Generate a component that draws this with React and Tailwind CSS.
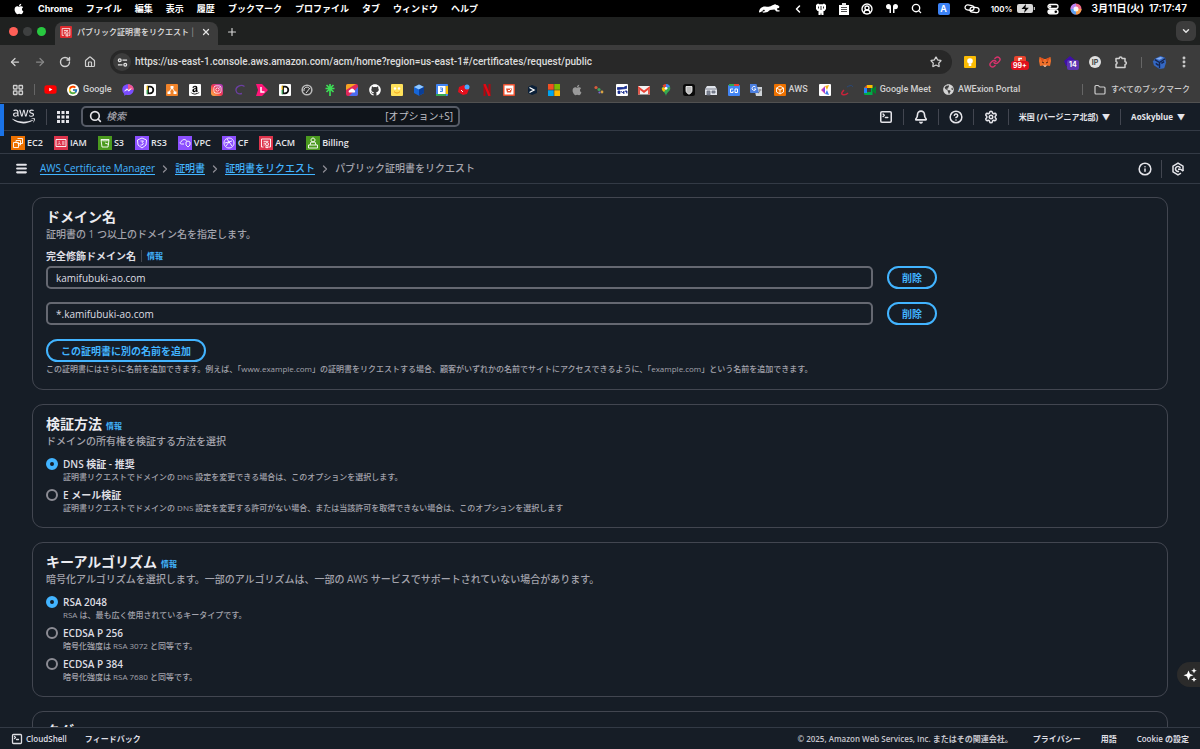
import React from "react";
import {
  ArrowLeft, ArrowRight, RotateCw, House, Star, Plus, X, ChevronDown, ChevronRight, ChevronLeft,
  Search, Bell, CircleHelp, Settings, Menu, Info, Folder, EllipsisVertical, LayoutGrid,
  CircleUserRound, SquareTerminal, Link,
} from "lucide-react";
import {
  FaApple, FaAws, FaAmazon, FaYoutube, FaFacebookMessenger, FaInstagram, FaGithub, FaGlobeAmericas,
} from "react-icons/fa";
import { FcGoogle } from "react-icons/fc";

const MENUS = ["ファイル", "編集", "表示", "履歴", "ブックマーク", "プロファイル", "タブ", "ウィンドウ", "ヘルプ"];

function Cat() {
  return (
    <svg viewBox="0 0 22 10" className="h-[10px] w-[22px]" fill="#fff">
      <path d="M1 7.500c.5-2.500 2-4.500 5-5 2-.4 4 .5 6 0 1.500-.4 2.500-1.500 4-1.700l1.200-.8.600.8 2.200.4 1.500 1.500-.6 1.300-2 .5.6 1.800h2v1.200h-3L16.500 5.500l-4.500.5-2.500 2-4 .8-1.500-1 3-.8L6 5.500 3 8l-2 .5z" />
    </svg>
  );
}

function Airpods() {
  return (
    <svg viewBox="0 0 14 12" className="h-3 w-[14px]" fill="#fff">
      <path d="M1 3.500C1 2 2 1 3.500 1S6 2 6 3.500V10H4.500V6C2.500 6.500 1 5.500 1 3.500zM13 3.500C13 2 12 1 10.500 1S8 2 8 3.500V10h1.500V6C11.500 6.500 13 5.500 13 3.500z" />
    </svg>
  );
}

function MenuBar() {
  return (
    <header className="flex h-[17px] shrink-0 items-center bg-black pr-[13px] pl-[13px] text-[9px] font-semibold text-white">
      <FaApple className="mr-[13px] size-3" />
      <nav className="flex flex-1 items-center gap-[13px] whitespace-nowrap">
        <span className="font-bold">Chrome</span>
        {MENUS.map((m) => <span key={m}>{m}</span>)}
      </nav>
      <div className="flex items-center whitespace-nowrap">
        <Cat />
        <ChevronLeft className="ml-3 size-3" strokeWidth={3} />
        <svg viewBox="0 0 12 12" className="ml-[11px] size-3" fill="#fff">
          <path d="M1 2l2-1.500 2 1 1-.5 1 .5 2-1L11 2v4L9.500 8H8.500v4h-2L6 9.500 5.500 12h-2V8h-1L1 6z" />
          <path d="M3.500 3.500v2M6 3v4M8.500 3.500v2" stroke="#000" strokeWidth=".8" />
        </svg>
        <svg viewBox="0 0 12 12" className="ml-[11px] size-3">
          <path d="M1 2h10v10H1z" fill="#fff" /><path d="M4 0h4v2.500H4z" fill="#ddd" />
          <path d="M3 4.500h6M3 6.500h6M3 8.500h6" stroke="#222" strokeWidth=".8" />
        </svg>
        <CircleUserRound className="ml-[11px] size-3" strokeWidth={2.8} />
        <span className="ml-3"><Airpods /></span>
        <Search className="ml-3 size-[11px]" strokeWidth={3} />
        <span className="ml-4 flex size-3 items-center justify-center rounded-[2px] bg-[#3b82f6] text-[9px] leading-none">A</span>
        <svg viewBox="0 0 16 12" className="ml-[14px] h-3 w-4" fill="none" stroke="#fff" strokeWidth="1.300">
          <rect x="1" y="2.300" width="9" height="5" rx="2.500" transform="rotate(8 6 5)" />
          <rect x="6" y="4.300" width="9" height="5" rx="2.500" transform="rotate(8 10 7)" />
        </svg>
        <span className="ml-[11px] text-[8px]">100%</span>
        <svg viewBox="0 0 18 9" className="ml-1 h-[9px] w-[18px]">
          <rect width="16" height="9" rx="2" fill="#d8d8d8" /><path d="M16.700 3v3h1.300V3z" fill="#bbb" />
          <path d="M9 0L4.500 5H8l-1 4 4.800-5.200H8.500z" fill="#000" />
        </svg>
        <svg viewBox="0 0 12 12" className="ml-3 size-3" fill="none" stroke="#fff" strokeWidth="1.300">
          <rect x="1" y="1.500" width="10" height="4" rx="2" /><rect x="1" y="6.800" width="10" height="4" rx="2" fill="#fff" />
          <circle cx="3" cy="3.500" r="1.300" fill="#fff" stroke="none" /><circle cx="8.800" cy="8.800" r="1.300" fill="#000" stroke="none" />
        </svg>
        <svg viewBox="0 0 12 12" className="ml-[11px] size-3">
          <circle cx="6" cy="6" r="5.500" fill="#ef6b8a" /><path d="M6 .5A5.500 5.500 0 0 0 .5 6H6z" fill="#b983f5" />
          <path d="M6 11.500A5.500 5.500 0 0 0 11.500 6H6z" fill="#f9a04b" /><path d="M.5 6A5.500 5.500 0 0 0 6 11.500V6z" fill="#5aa0f0" />
          <circle cx="6" cy="6" r="2.500" fill="#fff" opacity=".9" />
        </svg>
        <span className="ml-[10px] text-[10px]">3月11日(火)</span>
        <span className="ml-[5px] text-[10px]">17:17:47</span>
      </div>
    </header>
  );
}

function AcmGlyph({ className }) {
  return (
    <svg viewBox="0 0 14 14" className={className} fill="none" stroke="#fff" strokeWidth=".9">
      <path d="M4.500 11H2.500V3h9v8H10M4.500 5.300h5M4.500 7.200h1.800M4.500 9h1.200" />
      <circle cx="8" cy="8" r="1.500" /><path d="M7 9.500V12l1-.8 1 .8V9.500" />
    </svg>
  );
}

function TabStrip() {
  return (
    <div className="flex h-7 shrink-0 items-end bg-[#1f2120] pr-1 pl-[9px]">
      <div className="flex h-7 items-center gap-[5px] pt-[1px]">
        <i className="size-[9px] rounded-full bg-[#ff5f57]" />
        <i className="size-[9px] rounded-full bg-[#3e4040]" />
        <i className="size-[9px] rounded-full bg-[#28c840]" />
      </div>
      <div className="ml-[9px] flex h-[23px] w-[163px] items-center rounded-t-lg bg-[#3c3c3c] pr-[7px] pb-1 pl-[5px] text-[8px] font-medium text-[#e3e3e3]">
        <AcmGlyph className="size-3 shrink-0 rounded-[1px] bg-[#dd2b2f]" />
        <span className="ml-[5px] flex-1 whitespace-nowrap">パブリック証明書をリクエスト <span className="text-[#8a8a8a]">|</span></span>
        <button aria-label="タブを閉じる" className="ml-1"><X className="size-[10px]" strokeWidth={3} /></button>
      </div>
      <button aria-label="新しいタブ" className="ml-2 flex h-[23px] items-center pb-1 text-[#d5d5d5]"><Plus className="size-3" strokeWidth={2.300} /></button>
      <button aria-label="タブを検索" className="mb-1 ml-auto flex size-5 items-center justify-center rounded-md bg-[#3c3c3c] text-[#e3e3e3]">
        <ChevronDown className="size-[10px]" strokeWidth={3.500} />
      </button>
    </div>
  );
}

function Toolbar() {
  return (
    <div className="flex h-[34px] shrink-0 items-center bg-[#3c3c3c] pr-[9px] pl-[9px] text-[#d0d0d0]">
      <div className="flex items-center gap-[13px]">
        <button aria-label="戻る"><ArrowLeft className="size-3" strokeWidth={2.500} /></button>
        <button aria-label="進む" className="text-[#868686]"><ArrowRight className="size-3" strokeWidth={2.500} /></button>
        <button aria-label="再読み込み"><RotateCw className="size-3" strokeWidth={2.800} /></button>
        <button aria-label="ホーム"><House className="size-3" strokeWidth={2.400} /></button>
      </div>
      <div className="ml-[14px] flex h-6 flex-1 items-center rounded-full bg-[#282828] pr-[10px] pl-[3px]">
        <span className="flex size-[18px] items-center justify-center rounded-full bg-[#3c3c3c]">
          <svg viewBox="0 0 12 12" className="size-[11px]" fill="none" stroke="#e3e3e3" strokeWidth="1.400">
            <circle cx="3" cy="3.500" r="1.500" /><path d="M6 3.500h5M1 8.500h5" /><circle cx="9" cy="8.500" r="1.500" />
          </svg>
        </span>
        <input
          aria-label="アドレス"
          className="ml-1 min-w-0 flex-1 bg-transparent font-['Roboto',sans-serif] text-[10px] leading-4 font-medium text-[#dcdcdc] outline-none"
          defaultValue="https://us-east-1.console.aws.amazon.com/acm/home?region=us-east-1#/certificates/request/public"
        />
        <button aria-label="ブックマークに追加"><Star className="size-3" strokeWidth={2.500} /></button>
      </div>
      <div className="ml-3 flex items-center gap-[13px]">
        <svg viewBox="0 0 12 12" className="size-3"><rect width="12" height="12" rx="1" fill="#fbbc04" /><circle cx="6" cy="5" r="2.800" fill="#fff" /><path d="M4.700 7.500h2.600V10H4.700z" fill="#fff" /></svg>
        <Link className="size-3 text-[#d6336c]" strokeWidth={2.800} />
        <span className="relative size-3 rounded-[2px] bg-[#e8432d]">
          <svg viewBox="0 0 12 12" className="size-3"><path d="M8 2.500H5v3" fill="none" stroke="#fff" strokeWidth="1.500" /></svg>
          <b className="absolute top-[5px] -left-[3px] rounded-[3px] bg-[#e0101c] px-[2px] text-[7px] leading-[9px] text-white">99+</b>
        </span>
        <svg viewBox="0 0 12 12" className="size-3">
          <path d="M.5 1L5 3h2l4.500-2L12 5l-1 5-3-.5L6 11 4 9.500 1 10 0 5z" fill="#f0702a" /><path d="M.5 1L5 3 3.500 6zM11.500 1L7 3l1.500 3z" fill="#d9501e" /><path d="M4 9.500h4L6 11z" fill="#dfd4c8" /><path d="M3 6l2 1M9 6L7 7" stroke="#442212" />
        </svg>
        <span className="relative size-3">
          <svg viewBox="0 0 12 12" className="size-3"><path d="M0 5l6-5 6 5-2 5H2z" fill="#3f0fa8" /></svg>
          <b className="absolute top-1 left-[3px] rounded-[2px] bg-[#5e35b1] px-[2px] text-[7px] leading-[10px] text-white">14</b>
        </span>
        <span className="flex size-3 items-center justify-center rounded-full bg-[#e0e0e0] text-[7px] leading-none font-bold text-[#444]">IP</span>
        <svg viewBox="0 0 14 14" className="size-[14px]" fill="none" stroke="#d0d0d0" strokeWidth="1.500" strokeLinejoin="round">
          <path d="M2 3.500h3.200a1.400 1.400 0 0 1 2.800 0h3v3.200a1.400 1.400 0 0 1 0 2.800v3H2V9.300a1.500 1.500 0 0 0 0-2.900z" />
        </svg>
        <div className="flex items-center gap-[10px]">
          <i className="h-[11px] w-px bg-[#666]" />
          <svg viewBox="0 0 16 16" className="size-[15px]">
            <path d="M3 4l6-3 5 2 1 5-2 6-5 1-6-4-1-4z" fill="#3468c4" /><path d="M3 5l5 3 6-4M8 8v6M4 9l3 2M10 9l3-2" stroke="#14254f" strokeWidth="1.500" fill="none" /><path d="M4 4l5-2 3 1-4 2z" fill="#86aef2" />
          </svg>
          <button aria-label="メニュー"><EllipsisVertical className="size-[14px]" strokeWidth={3} /></button>
        </div>
      </div>
    </div>
  );
}

const S = ({ children }) => <svg viewBox="0 0 12 12" className="size-3 shrink-0">{children}</svg>;
const Chip = ({ className, children }) => (
  <span className={"flex size-3 shrink-0 items-center justify-center rounded-[1px] text-[10px] leading-none font-bold " + className}>{children}</span>
);
const D = () => (
  <S>
    <rect width="12" height="12" rx="1" fill="#fff" />
    <path d="M4 2.700h2a3.300 3.300 0 0 1 0 6.600H4z" fill="none" stroke="#111" strokeWidth="1.800" />
    <path d="M3.200 1.800v4" stroke="#f2b705" strokeWidth="1.300" /><path d="M3.200 6v4.200" stroke="#3aa655" strokeWidth="1.300" />
  </S>
);

function BookmarkIcons() {
  return (
    <div className="ml-[10px] flex w-[641px] items-center justify-between">
      <S><path d="M6 .3C2.700.3.300 2.600.300 5.700c0 1.700.7 3 1.900 4v2l1.800-1c.6.2 1.300.3 2 .3 3.300 0 5.700-2.300 5.700-5.300S9.300.3 6 .3z" fill="#7a4dff" /><path d="M6 .3c3.300 0 5.700 2.300 5.700 5.400L6 6z" fill="#f0568f" /><path d="M2.500 7.200l2.300-2.500 1.800 1.500 2.700-1.700-2.300 2.700-1.800-1.500z" fill="#fff" stroke="#fff" strokeWidth=".5" /></S>
      <D />
      <S><rect width="12" height="12" rx="1" fill="#f0832a" /><path d="M4.500 2h3v2.500h-3zM1.500 7.500h3V10h-3zM7.500 7.500h3V10h-3z" fill="#fff" /><path d="M6 4L3 8M6 4l3 4" stroke="#fff" /></S>
      <Chip className="bg-white text-black"><FaAmazon className="size-[10px]" /></Chip>
      <Chip className="rounded-[3px] bg-linear-to-tr from-[#feb938] via-[#f0324f] to-[#a12bc8] text-white"><FaInstagram className="size-[9px]" /></Chip>
      <S><path d="M10.500 2.500C7 0 1.500 2.500 2 6.500s4 3.500 6 3" fill="none" stroke="#6b3fa0" strokeWidth="1.300" /></S>
      <S><path d="M0 0h6l6 6-6 6H0l2-6z" fill="#ff1578" /><path d="M5 3v5h3.500" fill="none" stroke="#fff" strokeWidth="1.500" /></S>
      <D />
      <S><circle cx="6" cy="6" r="4.800" fill="#333" stroke="#bbb" strokeWidth="1.600" /><path d="M3 7a3 3 0 0 1 5-3M5 9l4-5" stroke="#ddd" fill="none" /></S>
      <S><path d="M6 0v12M1.500 4.500h9M2.500 1l7 7M9.500 1l-7 7" stroke="#3ddc55" strokeWidth="1.700" /></S>
      <S><rect width="12" height="12" rx="2" fill="#e0285a" /><path d="M0 2a2 2 0 0 1 2-2h8L0 6z" fill="#f5a623" /><path d="M12 3v7a2 2 0 0 1-2 2H3z" fill="#4a6cf0" /><path d="M3 8.500a1.500 1.500 0 0 1 1-2.500 2.200 2.200 0 0 1 4.200 0 1.400 1.400 0 0 1 .3 2.500z" fill="#fff" /></S>
      <FaGithub className="size-3 text-white" />
      <S><rect width="12" height="12" rx="1" fill="#ffe15a" /><circle cx="4" cy="4.500" r="1.200" fill="#fff" /><circle cx="8" cy="4.500" r="1.200" fill="#fff" /><path d="M3 7.500c2 2 4 2 6 0" fill="none" stroke="#f39c12" /></S>
      <S><path d="M6 .5l5 2.500v6l-5 2.800L1 9V3z" fill="#1666d8" /><path d="M6 .5l5 2.500-5 2.500L1 3z" fill="#8fc7ff" /><path d="M6 5.500L11 3v6l-5 2.800z" fill="#0b3f97" /></S>
      <S><rect width="12" height="12" rx="1" fill="#4285f4" /><path d="M9.500 2H12v8H9.500z" fill="#fbbc04" /><path d="M0 10h10v2H0z" fill="#34a853" /><path d="M2 2h7.500v8H2z" fill="#fff" /><path d="M4 4h2.500v3.500H4M6.500 5.800H4.500" stroke="#4285f4" fill="none" /></S>
      <S><path d="M1 3l5-2 5 4-2 5-4 1-5-3z" fill="#e5101e" /><circle cx="9" cy="3" r="2.500" fill="#4aa8ff" /><path d="M3 6l2 2" stroke="#fff" /></S>
      <S><path d="M3.500 0v12M8.500 0v12" stroke="#b1060f" strokeWidth="2" /><path d="M3.500 0l5 12" stroke="#e50914" strokeWidth="2.200" /></S>
      <S><rect width="12" height="12" rx="1" fill="#e8502f" /><path d="M1.500 1.500h9v9h-9z" fill="#fff" /><path d="M3 4.500h6l-1 4H4z" fill="#e8502f" /><path d="M5 6l1 1 2-2" stroke="#fff" fill="none" /></S>
      <S><path d="M2 3l4-2 5 2v6l-5 2-4-2z" fill="#0b2038" /><path d="M3.500 3.500L8 6 3.500 8.500" fill="none" stroke="#fff" strokeWidth="1.400" /></S>
      <S><path d="M0 0h5.700v5.700H0z" fill="#f25022" /><path d="M6.300 0H12v5.700H6.300z" fill="#7fba00" /><path d="M0 6.300h5.700V12H0z" fill="#00a4ef" /><path d="M6.300 6.300H12V12H6.300z" fill="#ffb900" /></S>
      <FaApple className="size-3 text-[#9a9a9a]" />
      <S><circle cx="3" cy="3.500" r="1.600" fill="#d95c3c" /><circle cx="6" cy="5.500" r="1.600" fill="#3da35d" /><circle cx="9" cy="8" r="1.400" fill="#d9a441" /><circle cx="6.500" cy="8.500" r="1.100" fill="#7c6bd6" /></S>
      <S><rect width="12" height="12" rx="1" fill="#fff" /><path d="M1.500 3.500h6l3-1.500v2.500l-9 1zM2 7h2v2.500H2zM5 7l1.500 2L8 7v3M9 7h2v2.500" fill="#1b2f8f" stroke="#1b2f8f" strokeWidth=".8" /></S>
      <S><path d="M0 2h12v8.500H0z" fill="#f1f1f1" /><path d="M0 2l6 4.500L12 2v2.500L6 9 0 4.500z" fill="#ea4335" /><path d="M0 4v6.500h2V5.500zM12 4v6.500h-2V5.500z" fill="#e05a4d" /></S>
      <S><path d="M6 0a4.300 4.300 0 0 1 4.300 4.300C10.300 7.500 6.800 8 6 12 5.200 8 1.700 7.500 1.700 4.300z" fill="#34a853" /><path d="M6 0a4.300 4.300 0 0 0-3.500 1.800L6 5z" fill="#ea4335" /><path d="M6 0c2 0 3.300 1.200 3.900 2.500L6 4.500z" fill="#4285f4" /><path d="M1.800 4.500C1.800 6 3 7 4 8l2-3-3-2z" fill="#fbbc04" /><circle cx="6" cy="4.300" r="1.400" fill="#fff" /></S>
      <S><rect width="12" height="12" rx="2.500" fill="#0a0a0a" /><path d="M3 2.500h6v4C9 8.500 7.500 9.500 6 10.200 4.500 9.500 3 8.500 3 6.500z" fill="#bbb" stroke="#fff" strokeWidth=".8" /></S>
      <S><path d="M0 5l2-3h8l2 3v6H0z" fill="#dfe3ea" /><path d="M2 7h3v4H2zM7 7h3v2H7zM0 5h12" stroke="#69707d" fill="#7d8594" strokeWidth=".8" /></S>
      <S><rect y="1" width="12" height="11" rx="1" fill="#4285f4" /><path d="M1 0h5v2H1z" fill="#34a853" /><path d="M6 0h5v2H6z" fill="#ea4335" /><path d="M5 5H2.500v3.500H5V7M7 5v3.500h2.500V5z" stroke="#fff" fill="none" /></S>
      <S><path d="M4 3h8v9H6z" fill="#cfd3d8" /><path d="M0 0h6.500L9 9H1a1 1 0 0 1-1-1z" fill="#4c7fe0" /><path d="M5.500 3A2 2 0 1 0 6 5H4" stroke="#fff" fill="none" strokeWidth=".9" /><path d="M8.500 6h3M10 5v1c0 1-1 3-2 3" stroke="#666" fill="none" strokeWidth=".7" /></S>
    </div>
  );
}

function Bookmarks() {
  return (
    <div className="flex h-6 shrink-0 items-center border-b border-[#515151] bg-[#3c3c3c] pr-[10px] pb-[2px] pl-3 font-['Roboto','Noto_Sans_CJK_JP',sans-serif] text-[9px] font-medium whitespace-nowrap text-[#d0d0d0]">
      <LayoutGrid className="size-3" strokeWidth={2.600} />
      <i className="ml-[10px] h-[11px] w-px bg-[#666]" />
      <span className="relative ml-[9px] flex size-[13px] items-center justify-center"><i className="absolute size-[6px] bg-white" /><FaYoutube className="relative size-[13px] text-[#f00]" /></span>
      <a href="#google" className="ml-[10px] flex items-center gap-1">
        <span className="flex size-3 items-center justify-center rounded-full bg-white"><FcGoogle className="size-[10px]" /></span>Google
      </a>
      <BookmarkIcons />
      <a href="#aws" className="ml-[11px] flex items-center gap-[3px]">
        <S><rect width="12" height="12" rx="1" fill="#ed7100" /><path d="M6 2l3.500 2v4L6 10 2.500 8V4zM2.500 4L6 6l3.500-2M6 6v4" fill="none" stroke="#fff" strokeWidth=".9" /></S>AWS
      </a>
      <span className="ml-[11px]"><S><rect width="12" height="12" rx="1" fill="#fff" /><path d="M2 6l4-4v8z" fill="#f04f9a" /><path d="M6 2l4-1-2 5z" fill="#f6b21b" /><path d="M6 10l4 1-2-5z" fill="#3f7be8" /><path d="M6 3v6L3 6z" fill="#8b3fe0" /></S></span>
      <span className="ml-[10px]"><S><path d="M3 6C1 8 0 10 1.500 10.500 3.500 11.200 6 10 7 9" fill="none" stroke="#c8233a" strokeWidth="1.500" /><path d="M6 3c3-2 6-2 5.500 0" fill="none" stroke="#294a7d" strokeWidth="1" /></S></span>
      <a href="#meet" className="ml-[11px] flex items-center gap-1">
        <S><path d="M0 3.500L3 1h5.500v10H1.500A1.500 1.500 0 0 1 0 9.500z" fill="#00ac47" /><path d="M0 4l3-3v3z" fill="#ea4335" /><path d="M0 4h3v5H0z" fill="#2684fc" /><path d="M3 1h5.500v3H3z" fill="#ffba00" /><path d="M3 4h4v4H3z" fill="#3c3c3c" /><path d="M8 5.500L12 2v8L8 7z" fill="#00832d" /></S>Google Meet
      </a>
      <a href="#portal" className="ml-3 flex items-center gap-1">
        <FaGlobeAmericas className="size-[11px] text-[#d5d5d5]" />AWExion Portal
      </a>
      <i className="ml-auto h-[11px] w-px bg-[#666]" />
      <a href="#bookmarks" className="ml-[11px] flex items-center gap-[5px] text-[8px]"><Folder className="size-3" strokeWidth={2.300} />すべてのブックマーク</a>
    </div>
  );
}

const Sep = ({ className = "h-4" }) => <i className={"w-px bg-[#424650] " + className} />;

const SERVICES = [
  ["EC2", "bg-[#ed7100]", "M2.500 6.500h5v5h-5zM6.500 2.500h5v5h-5M5 6.500V4.500h4.500V9H7.500"],
  ["IAM", "bg-[#dd344c]", "M2 3.500h10v7H2zM4 8.500c0-1 2.500-1 2.500 0M8 6h2.500M8 8h2.500M5.200 5.300v1.200"],
  ["S3", "bg-[#4b9a1f]", "M3 3.500h8L10 11H4zM3 4c1 1.200 7 1.200 8 0M7 7l4 1.500"],
  ["RS3", "bg-[#8c4fff]", "M7 2l4.500 2-.5 5-4 3-4-3-.5-5zM5.500 5h3L7 6.500l1.500 1.200L7 9H5.500"],
  ["VPC", "bg-[#8c4fff]", "M6 8H3.500C1.500 8 2 5.500 3.500 5.500 4 3 8 3 8.500 5M8 6l2-1 2 1v3l-2 2-2-2z"],
  ["CF", "bg-[#8c4fff]", "M7 2a5 5 0 1 0 .01 0M5 3l5 7M3 7l7-2M4 10l3-4"],
  ["ACM", "bg-[#dd344c]", null],
  ["Billing", "bg-[#4b9a1f]", "M2.500 9h9v3h-9zM4 9L5 6h4l1 3M7 2a2 2 0 1 0 .01 0"],
];

const CRUMB_LINK = "border-b border-[#42b4ff] leading-3";

function AwsHeader() {
  return (
    <div className="relative shrink-0 bg-[#161d26] text-[#e5e5ea]">
      <i className="absolute top-[1px] left-0 h-8 w-1 bg-[#1a73e8]" />
      <div className="flex h-7 items-center border-b border-[#333a45] pr-[15px] pl-3">
        <a href="#home" aria-label="AWS"><FaAws className="h-[23px] w-[23px]" /></a>
        <Sep className="ml-[11px] h-4" />
        <button aria-label="サービス" className="ml-[10px]">
          <svg viewBox="0 0 12 12" className="size-3" fill="#e5e5ea">
            <path d="M0 0h3v3H0zM4.500 0h3v3h-3zM9 0h3v3H9zM0 4.500h3v3H0zM4.500 4.500h3v3h-3zM9 4.500h3v3H9zM0 9h3v3H0zM4.500 9h3v3h-3zM9 9h3v3H9z" />
          </svg>
        </button>
        <label className="ml-3 flex h-[21px] w-[379px] items-center rounded-[5px] border-2 border-[#565b66] bg-[#0f141a] pr-[5px] pl-[6px]">
          <Search className="size-[13px] shrink-0" strokeWidth={3} />
          <input aria-label="検索" placeholder="検索" className="ml-1 min-w-0 flex-1 bg-transparent text-[10px] font-medium outline-none placeholder:text-[#a4a4ad] placeholder:italic" />
          <span className="text-[10px] text-[#c0c0c8]">[オプション+S]</span>
        </label>
        <div className="ml-auto flex items-center gap-[10px] text-[8px] font-bold">
          <button aria-label="CloudShell"><SquareTerminal className="size-[14px]" strokeWidth={2.600} /></button>
          <Sep />
          <button aria-label="通知"><Bell className="size-[14px]" strokeWidth={2.800} /></button>
          <Sep />
          <button aria-label="ヘルプ"><CircleHelp className="size-[14px]" strokeWidth={2.600} /></button>
          <Sep />
          <button aria-label="設定"><Settings className="size-[14px]" strokeWidth={2.600} /></button>
          <Sep />
          <button className="flex items-center gap-1">米国 (バージニア北部) <span>▼</span></button>
          <Sep />
          <button className="flex items-center gap-1">AoSkyblue <span>▼</span></button>
        </div>
      </div>
      <nav className="flex h-[23px] items-center gap-[11px] border-b border-[#333a45] pt-px pl-[11px] text-[9px] font-semibold">
        {SERVICES.map(([name, bg, d]) => (
          <a key={name} href={"#" + name} className="flex items-center gap-[2px]">
            {d
              ? <svg viewBox="0 0 14 14" className={"size-[14px] " + bg} fill="none" stroke="#fff" strokeWidth=".9"><path d={d} /></svg>
              : <AcmGlyph className={"size-[14px] " + bg} />}
            {name}
          </a>
        ))}
      </nav>
      <div className="flex h-[30px] items-center border-b border-[#333a45] pr-[15px] pl-[15px] text-[10px]">
        <button aria-label="メニュー"><Menu className="size-[13px]" strokeWidth={4} /></button>
        <nav className="ml-3 flex items-center gap-1 font-medium text-[#42b4ff]">
          <a href="#acm" className={CRUMB_LINK}>AWS Certificate Manager</a>
          <ChevronRight className="size-3 text-[#8c8c94]" strokeWidth={2.600} />
          <a href="#certs" className={CRUMB_LINK}>証明書</a>
          <ChevronRight className="size-3 text-[#8c8c94]" strokeWidth={2.600} />
          <a href="#request" className={CRUMB_LINK}>証明書をリクエスト</a>
          <ChevronRight className="size-3 text-[#8c8c94]" strokeWidth={2.600} />
          <span className="text-[#a4a4ad]">パブリック証明書をリクエスト</span>
        </nav>
        <div className="ml-auto flex items-center gap-[9px]">
          <button aria-label="情報パネル"><Info className="size-[14px]" strokeWidth={2.600} /></button>
          <Sep className="h-[18px]" />
          <button aria-label="Amazon Q" className="flex">
            <svg viewBox="0 0 14 14" className="size-[14px]" fill="none" stroke="#e5e5ea" strokeWidth="1.500">
              <path d="M10 11.200L7 12.800 2 9.800V4.200L7 1.200l5 3V9" /><path d="M9.300 6A2.500 2.500 0 1 0 8 9.200M7 7.200h2.500l2.800 2" />
            </svg>
          </button>
        </div>
      </div>
    </div>
  );
}

const InfoLink = () => <a href="#info" className="text-[8px] font-bold text-[#42b4ff]">情報</a>;

function Card({ title, info, desc, children }) {
  return (
    <section className="rounded-[11px] border border-[#424650] px-[13px] pt-[9px] pb-[14px]">
      <h2 className="flex h-5 items-baseline gap-1 text-[14px] leading-5 font-bold text-[#ebebf0]">{title}{info && <InfoLink />}</h2>
      {desc && <p className="text-[10px] leading-[14px] font-medium text-[#a4a4ad]">{desc}</p>}
      {children}
    </section>
  );
}

const OUTLINE = "h-[23px] rounded-full border-2 border-[#42b4ff] px-[13px] text-[10px] leading-none font-bold text-[#42b4ff]";

function DomainRow({ value, index }) {
  return (
    <div className="flex items-center gap-[14px]">
      <input
        id={"domain-" + index}
        aria-label={"完全修飾ドメイン名 " + (index + 1)}
        defaultValue={value}
        className="h-[23px] w-[827px] rounded-[5px] border-2 border-[#656871] bg-transparent px-2 text-[10px] font-medium text-[#dedee3] outline-none"
      />
      <button className={OUTLINE}>削除</button>
    </div>
  );
}

function RadioList({ name, options }) {
  return (
    <div className="mt-2 flex flex-col gap-[5px]">
      {options.map(([label, help], i) => (
        <label key={label} className="grid grid-cols-[12px_1fr] gap-x-[5px]">
          <input
            type="radio"
            name={name}
            defaultChecked={i === 0}
            className="size-3 appearance-none self-center rounded-full border-2 border-[#8c8c94] checked:border-4 checked:border-[#42b4ff]"
          />
          <span className="text-[10px] leading-4 font-semibold text-[#dedee3]">{label}</span>
          <span className="col-start-2 text-[8px] leading-[10px] font-medium text-[#a4a4ad]">{help}</span>
        </label>
      ))}
    </div>
  );
}

export default function App() {
  return (
    <div className="flex h-screen flex-col overflow-hidden bg-[#161d26] font-['Open_Sans','Noto_Sans_CJK_JP',sans-serif]">
      <div className="flex shrink-0 flex-col font-['Inter','Noto_Sans_CJK_JP',sans-serif]">
        <MenuBar />
        <TabStrip />
        <Toolbar />
        <Bookmarks />
      </div>
      <AwsHeader />
      <div className="relative flex min-h-0 flex-1 flex-col">
        <main className="flex min-h-0 flex-1 flex-col gap-[14px] overflow-y-auto px-8 pt-[13px] [scrollbar-width:none] *:shrink-0">
          <Card title="ドメイン名" desc="証明書の 1 つ以上のドメイン名を指定します。">
            <div className="mt-2 mb-[3px] flex items-center text-[10px] leading-[14px]">
              <label htmlFor="domain-0" className="font-bold text-[#dedee3]">完全修飾ドメイン名</label>
              <i className="mx-[5px] h-3 w-px bg-[#424650]" />
              <InfoLink />
            </div>
            <div className="flex flex-col gap-[13px]">
              {["kamifubuki-ao.com", "*.kamifubuki-ao.com"].map((v, i) => <DomainRow key={v} value={v} index={i} />)}
            </div>
            <button className={OUTLINE + " mt-[14px] block"}>この証明書に別の名前を追加</button>
            <p className="mt-px text-[8px] leading-3 font-medium text-[#a4a4ad]">
              この証明書にはさらに名前を追加できます。例えば、「www.example.com」の証明書をリクエストする場合、顧客がいずれかの名前でサイトにアクセスできるように、「example.com」という名前を追加できます。
            </p>
          </Card>
          <Card title="検証方法" info desc="ドメインの所有権を検証する方法を選択">
            <RadioList
              name="validation"
              options={[
                ["DNS 検証 - 推奨", "証明書リクエストでドメインの DNS 設定を変更できる場合は、このオプションを選択します。"],
                ["E メール検証", "証明書リクエストでドメインの DNS 設定を変更する許可がない場合、または当該許可を取得できない場合は、このオプションを選択します"],
              ]}
            />
          </Card>
          <Card title="キーアルゴリズム" info desc="暗号化アルゴリズムを選択します。一部のアルゴリズムは、一部の AWS サービスでサポートされていない場合があります。">
            <RadioList
              name="algorithm"
              options={[
                ["RSA 2048", "RSA は、最も広く使用されているキータイプです。"],
                ["ECDSA P 256", "暗号化強度は RSA 3072 と同等です。"],
                ["ECDSA P 384", "暗号化強度は RSA 7680 と同等です。"],
              ]}
            />
          </Card>
          <Card title="タグ" />
        </main>
        <button aria-label="アシスタント" className="absolute right-0 bottom-10 flex h-[25px] w-[23px] items-center justify-end rounded-l-full bg-[#2b2b2b] pr-[3px]">
          <svg viewBox="0 0 14 14" className="size-[14px]" fill="#fff">
            <path d="M5.500 2.500L7 6l3.500 1.200L7 8.500l-1.500 3.700L4 8.500.5 7.200 4 6zM11 0l.8 2 2 .8-2 .8-.8 2-.8-2-2-.8 2-.8zM11 9l.8 1.700 2 .8-2 .8L11 14l-.8-1.700-2-.8 2-.8z" />
          </svg>
        </button>
      </div>
      <footer className="flex h-[22px] shrink-0 items-center border-t border-[#333a45] px-[11px] text-[8px] font-semibold text-[#dedee3]">
        <button className="flex items-center gap-[3px]"><SquareTerminal className="size-3" strokeWidth={2.600} />CloudShell</button>
        <a href="#feedback" className="ml-[18px]">フィードバック</a>
        <span className="ml-auto text-[#c6c6cd]">© 2025, Amazon Web Services, Inc. またはその関連会社。</span>
        <a href="#privacy" className="ml-5">プライバシー</a>
        <a href="#terms" className="ml-5">用語</a>
        <a href="#cookie" className="ml-5">Cookie の設定</a>
      </footer>
    </div>
  );
}
